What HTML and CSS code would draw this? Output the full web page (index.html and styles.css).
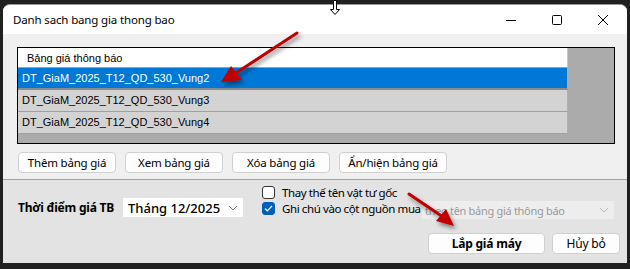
FILE: index.html
```html
<!DOCTYPE html>
<html lang="vi">
<head>
    <meta charset="UTF-8">
    <title>Danh sach bang gia thong bao</title>
    <link rel="stylesheet" href="styles.css">
</head>
<body>
    <div class="window">
        <div class="titlebar">
            <span class="title">Danh sach bang gia thong bao</span>
            <div class="controls">
                <svg width="46" height="30" viewBox="0 0 46 30"><path d="M18 15.5h10" stroke="#000" stroke-width="1"/></svg>
                <svg width="46" height="30" viewBox="0 0 46 30"><rect x="18.5" y="10.5" width="9" height="9" rx="1" fill="none" stroke="#000"/></svg>
                <svg width="46" height="30" viewBox="0 0 46 30"><path d="M18 10l10 10M28 10l-10 10" stroke="#000" stroke-width="1"/></svg>
            </div>
        </div>

        <div class="top">
            <div class="grid">
                <div class="list">
                    <div class="list-head">Bảng giá thông báo</div>
                    <div class="row selected">DT_GiaM_2025_T12_QD_530_Vung2</div>
                    <div class="row">DT_GiaM_2025_T12_QD_530_Vung3</div>
                    <div class="row">DT_GiaM_2025_T12_QD_530_Vung4</div>
                </div>
            </div>
            <div class="actions">
                <button class="btn">Thêm bảng giá</button>
                <button class="btn">Xem bảng giá</button>
                <button class="btn">Xóa bảng giá</button>
                <button class="btn wide">Ẩn/hiện bảng giá</button>
            </div>
        </div>

        <div class="bottom">
            <div class="options">
                <span class="label">Thời điểm giá TB</span>
                <div class="select month">
                    <span>Tháng 12/2025</span>
                    <svg width="10" height="6" viewBox="0 0 10 6"><path d="M1 1l4 4 4-4" fill="none" stroke="#777"/></svg>
                </div>
                <div class="checks">
                    <label class="check"><span class="box"></span>Thay thế tên vật tư gốc</label>
                    <label class="check"><span class="box on"><svg width="9" height="7" viewBox="0 0 9 7"><path d="M1 3.5l2.3 2.3L8 1" fill="none" stroke="#fff" stroke-width="1.2"/></svg></span>Ghi chú vào cột nguồn mua</label>
                </div>
                <div class="select source">
                    <span>theo tên bảng giá thông báo</span>
                    <svg width="10" height="6" viewBox="0 0 10 6"><path d="M1 1l4 4 4-4" fill="none" stroke="#bbb"/></svg>
                </div>
            </div>
            <div class="footer">
                <button class="btn main">Lắp giá máy</button>
                <button class="btn cancel">Hủy bỏ</button>
            </div>
        </div>
    </div>

    <!-- red annotation arrows and the mouse cursor sit over the dialog -->
    <svg class="overlay" width="630" height="269" viewBox="0 0 630 269">
        <defs>
            <filter id="shadow" x="-20%" y="-20%" width="140%" height="140%">
                <feDropShadow dx="2" dy="3" stdDeviation="2" flood-color="#000" flood-opacity="0.45"/>
            </filter>
        </defs>
        <g filter="url(#shadow)" fill="#c00000" stroke="#c00000">
            <path d="M297 33L236 73" stroke-width="3" stroke-linecap="round"/>
            <path d="M221 82L231 66L242 80Z" stroke="none"/>
            <path d="M409 194L443 217" stroke-width="3" stroke-linecap="round"/>
            <path d="M454 226L436 221L446 209Z" stroke="none"/>
        </g>
        <path d="M333.5 0.5v9h-3l4.5 5 4.5-5h-3v-9z" fill="#fff" stroke="#000" stroke-width="1"/>
    </svg>
</body>
</html>
```

FILE: styles.css
```css
body {
    margin: 0;
    width: 630px;
    height: 269px;
    background: #202020;
    font-family: 'Noto Sans', 'Open Sans', sans-serif;
    font-size: 12px;
    color: #000;
    overflow: hidden;
    position: relative;
}
.window {
    margin: 4px 0 0 3px;
    width: 624px;
    height: 259px;
    background: #f0f0f0;
    border-radius: 7px 7px 0 0;
    overflow: hidden;
    display: flex;
    flex-direction: column;
    border-top: 1px solid #9a9a9a;
    box-sizing: border-box;
}
.titlebar {
    height: 29px;
    background: #ffffff;
    display: flex;
    align-items: center;
    justify-content: space-between;
    flex-shrink: 0;
}
.title {
    padding-left: 10px;
    font-size: 11.5px;
    letter-spacing: -0.15px;
}
.controls {
    display: flex;
    margin-right: 1px;
}
.top {
    height: 146px;
    padding: 13px 0 0 14px;
    box-sizing: border-box;
    border-bottom: 1px solid #a0a0a0;
    flex-shrink: 0;
}
.grid {
    width: 598px;
    height: 97px;
    border: 1px solid #000;
    background: #ababab;
    box-sizing: border-box;
}
.list {
    width: 550px;
    font-family: 'Liberation Sans', Arial, sans-serif;
    font-size: 11px;
}
.list-head {
    height: 20px;
    line-height: 20px;
    background: #fff;
    padding-left: 9px;
    border-bottom: 1px solid #a0a0a0;
    border-right: 1px solid #c8c8c8;
    box-sizing: border-box;
}
.row {
    height: 22px;
    line-height: 21px;
    padding-left: 4px;
    background: #d3d3d3;
    border-bottom: 1px solid #a0a0a0;
    border-right: 1px solid #b0b0b0;
    box-sizing: border-box;
}
.row.selected {
    background: #0078d7;
    color: #fff;
    border-bottom: 2px solid #8a8a8a;
}
.actions {
    display: flex;
    gap: 9px;
    margin-top: 8px;
    padding-left: 1px;
}
.btn {
    font-family: 'Noto Sans', 'Open Sans', sans-serif;
    font-size: 11.5px;
    height: 21px;
    width: 98px;
    padding: 0;
    background: #fdfdfd;
    border: 1px solid #d0d0d0;
    border-radius: 4px;
    color: #000;
    letter-spacing: -0.2px;
}
.btn.wide {
    width: 108px;
}
.bottom {
    flex: 1;
    background: #e3e3e3;
    padding: 4px 0 0 15px;
    box-sizing: border-box;
}
.options {
    display: flex;
    align-items: flex-start;
}
.label {
    font-weight: bold;
    font-size: 12px;
    margin-top: 15px;
    width: 105px;
    flex-shrink: 0;
    letter-spacing: -0.2px;
}
.select {
    background: #fff;
    display: flex;
    align-items: center;
    justify-content: space-between;
    box-sizing: border-box;
    padding: 0 5px;
    flex-shrink: 0;
}
.month {
    width: 120px;
    height: 19px;
    margin-top: 14px;
    font-size: 13px;
    font-weight: 500;
}
.checks {
    display: flex;
    flex-direction: column;
    gap: 3px;
    margin-left: 19px;
    margin-top: 2px;
    flex-shrink: 0;
}
.check {
    display: flex;
    align-items: center;
    gap: 7px;
    font-size: 11.5px;
    height: 13px;
    white-space: nowrap;
    letter-spacing: -0.4px;
}
.box {
    width: 13px;
    height: 13px;
    border: 1px solid #333;
    border-radius: 3px;
    background: #fff;
    box-sizing: border-box;
    display: flex;
    align-items: center;
    justify-content: center;
    flex-shrink: 0;
}
.box.on {
    background: #005fb8;
    border-color: #005fb8;
}
.source {
    width: 192px;
    height: 18px;
    margin: 17px 13px 0 auto;
    background: #ededed;
    color: #9a9a9a;
    font-size: 11px;
    letter-spacing: -0.3px;
    padding-left: 3px;
    white-space: nowrap;
    overflow: hidden;
}
.footer {
    display: flex;
    justify-content: flex-end;
    gap: 7px;
    margin-top: 14px;
    padding-right: 7px;
}
.btn.main {
    width: 117px;
    font-weight: bold;
    font-size: 12px;
}
.btn.cancel {
    width: 68px;
    font-size: 12px;
}
.overlay {
    position: absolute;
    left: 0;
    top: 0;
    pointer-events: none;
}
```
